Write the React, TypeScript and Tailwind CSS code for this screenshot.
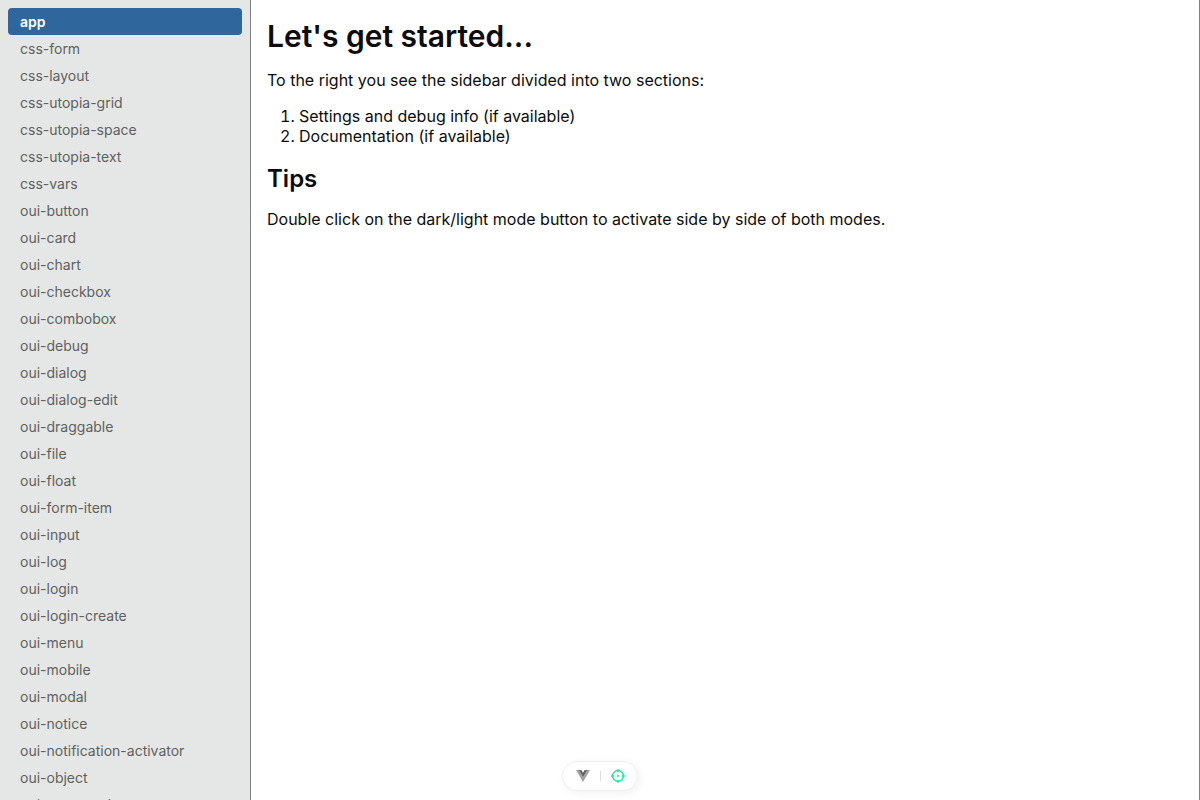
import { useState } from 'react'

const items = [
  'app',
  'css-form',
  'css-layout',
  'css-utopia-grid',
  'css-utopia-space',
  'css-utopia-text',
  'css-vars',
  'oui-button',
  'oui-card',
  'oui-chart',
  'oui-checkbox',
  'oui-combobox',
  'oui-debug',
  'oui-dialog',
  'oui-dialog-edit',
  'oui-draggable',
  'oui-file',
  'oui-float',
  'oui-form-item',
  'oui-input',
  'oui-log',
  'oui-login',
  'oui-login-create',
  'oui-menu',
  'oui-mobile',
  'oui-modal',
  'oui-notice',
  'oui-notification-activator',
  'oui-object',
  'oui-password',
]

function Sidebar() {
  const [active, setActive] = useState('app')
  return (
    <nav
      aria-label="Components"
      className="w-[251px] shrink-0 overflow-hidden border-r border-[#808080] bg-[#e5e7e6] p-2 text-sm"
    >
      <ul>
        {items.map((item) => (
          <li key={item}>
            <a
              href={`#${item}`}
              onClick={() => setActive(item)}
              aria-current={item === active ? 'page' : undefined}
              className={
                item === active
                  ? 'block rounded bg-[#2f669c] px-3 leading-[27px] font-semibold text-white'
                  : 'block rounded px-3 leading-[27px] text-[#5f6160]'
              }
            >
              {item}
            </a>
          </li>
        ))}
      </ul>
    </nav>
  )
}

function DevtoolsBar() {
  return (
    <div className="fixed bottom-[9px] left-1/2 flex h-[30px] w-fit -translate-x-1/2 items-center rounded-full border border-[#eeeeee] bg-white pr-0.5 pl-[3px] shadow-[2px_2px_8px_rgba(0,0,0,0.06)]">
      <button type="button" aria-label="Toggle devtools" className="flex w-[34px] justify-center">
        <svg className="h-3.5 w-3.5" viewBox="0 0 256 221" aria-hidden="true">
          <path fill="#a0a0a0" d="m0 0 128 220.8L256 0h-51.2L128 132.48 50.56 0z" />
          <path fill="#646464" d="M50.56 0 128 133.12 204.8 0h-47.36L128 51.2 97.92 0z" />
        </svg>
      </button>
      <span className="h-2.5 w-px bg-[#dddddd]" />
      <button type="button" aria-label="Inspect component" className="flex w-[34px] justify-center text-[#2ce29b]">
        <svg
          className="h-4 w-4"
          viewBox="1 1 22 22"
          fill="none"
          stroke="currentColor"
          strokeWidth="2"
          strokeLinecap="round"
          strokeLinejoin="round"
          aria-hidden="true"
        >
          <circle cx="12" cy="12" r=".5" />
          <path d="M4.5 12a7.5 7.5 0 1 0 15 0a7.5 7.5 0 1 0-15 0M12 3v3m-9 6h3m6 6v3m6-9h3" />
        </svg>
      </button>
    </div>
  )
}

export default function App() {
  return (
    <div className="flex h-screen bg-white font-['Inter',sans-serif] text-[#0c0c0c]">
      <Sidebar />
      <main className="min-w-0 flex-1 overflow-auto border-r border-[#808080] p-4 leading-5">
        <h1 className="text-3xl leading-10 font-semibold">Let's get started...</h1>
        <p className="mt-3.5">To the right you see the sidebar divided into two sections:</p>
        <ol className="mt-4 list-decimal pl-8">
          <li>Settings and debug info (if available)</li>
          <li>Documentation (if available)</li>
        </ol>
        <h2 className="mt-[17px] text-2xl leading-8 font-semibold">Tips</h2>
        <p className="mt-3.5">
          Double click on the dark/light mode button to activate side by side of both modes.
        </p>
      </main>
      <DevtoolsBar />
    </div>
  )
}
